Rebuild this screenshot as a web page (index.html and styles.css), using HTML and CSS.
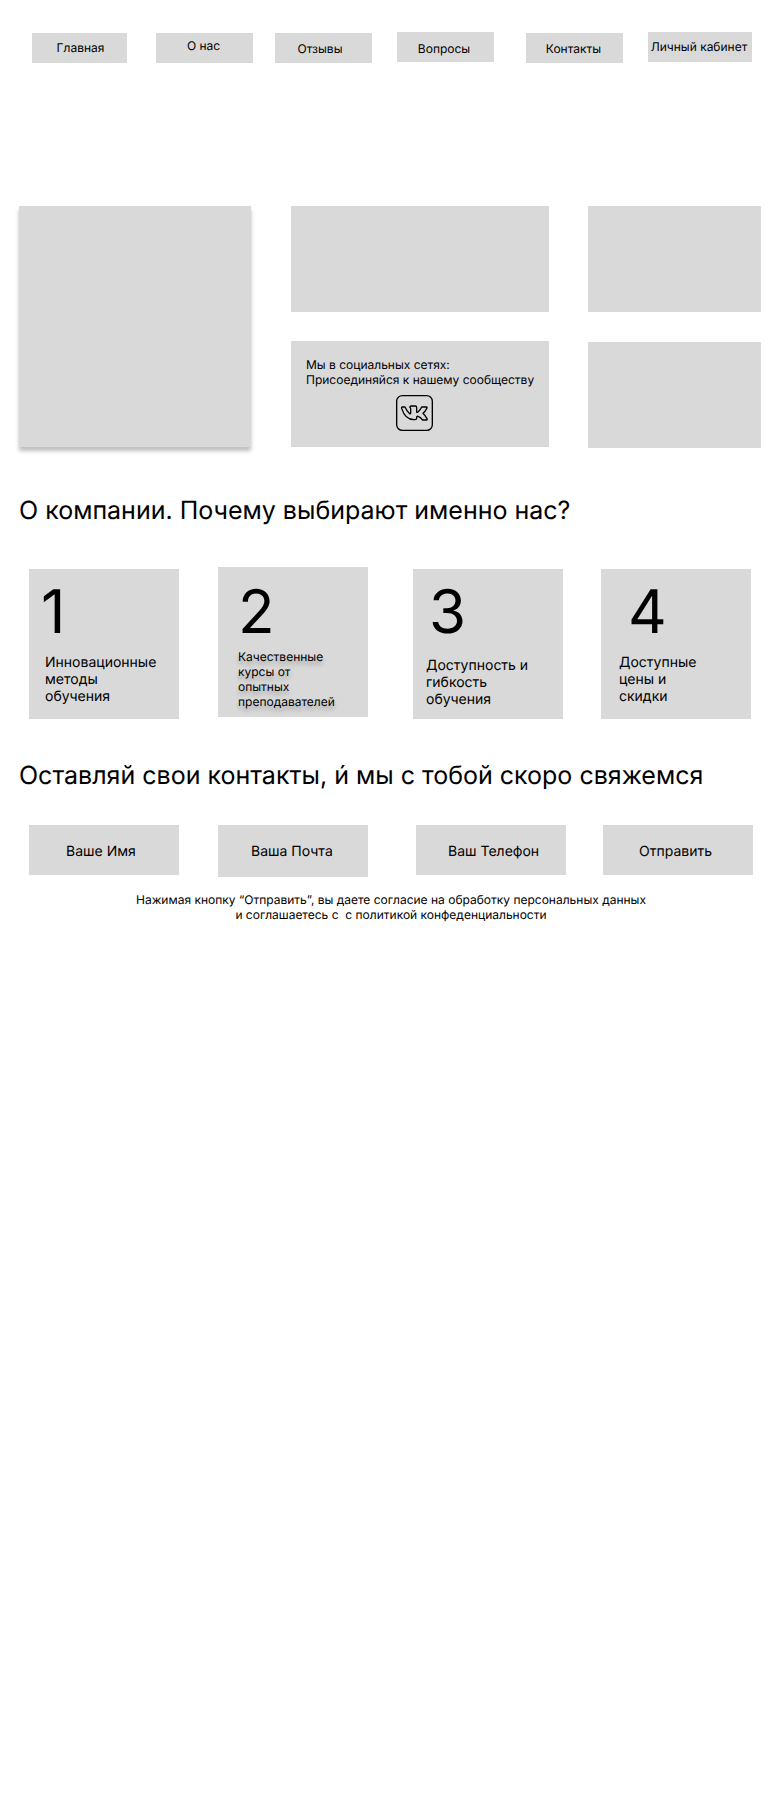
FILE: index.html
```
<!DOCTYPE html>
<html lang="ru">
<head>
<meta charset="utf-8">
<meta name="viewport" content="width=device-width, initial-scale=1">
<title>Главная</title>
<link rel="stylesheet" href="styles.css">
</head>
<body>
<header>
  <nav class="nav">
    <a class="nav-link nav-home" href="#">Главная</a>
    <a class="nav-link nav-about" href="#about">О нас</a>
    <a class="nav-link nav-reviews" href="#">Отзывы</a>
    <a class="nav-link nav-questions" href="#">Вопросы</a>
    <a class="nav-link nav-contacts" href="#contacts">Контакты</a>
    <a class="nav-link nav-account" href="#">Личный кабинет</a>
  </nav>
</header>
<main>
  <section class="tiles">
    <div class="tile tile-large"></div>
    <div class="tile-column">
      <div class="tile"></div>
      <div class="tile social">
        <p class="social-text">Мы в социальных сетях:<br>Присоединяйся к нашему сообществу</p>
        <a class="social-link" href="#" aria-label="ВКонтакте">
          <svg class="social-icon" viewBox="0 0 111 108" fill="none" stroke="#000" stroke-width="4" stroke-linejoin="round">
            <rect x="2" y="2" width="107" height="104" rx="17"/>
            <path d="M19 36H27Q32 48 41 56Q44 58 44 54V42Q44 38 41 36Q43 33 47 33H58Q62 33 62 38V50Q62 54 66 51Q73 45 77 36H91Q95 36 92 41Q88 49 81 55Q89 63 93 71Q95 75 91 75H80Q73 66 66 64Q62 63 62 67V70Q62 74 57 74Q28 76 17 40Q16 36 19 36Z"/>
          </svg>
        </a>
      </div>
    </div>
    <div class="tile-column tile-column-last">
      <div class="tile"></div>
      <div class="tile"></div>
    </div>
  </section>

  <section id="about">
    <h2 class="title">О компании. Почему выбирают именно нас?</h2>
    <div class="cards">
      <article class="card card-first">
        <p class="number">1</p>
        <p class="card-text">Инновационные<br>методы<br>обучения</p>
      </article>
      <article class="card card-second">
        <p class="number">2</p>
        <p class="card-text">Качественные<br>курсы от<br>опытных<br>преподавателей</p>
      </article>
      <article class="card card-third">
        <p class="number">3</p>
        <p class="card-text">Доступность и<br>гибкость<br>обучения</p>
      </article>
      <article class="card card-fourth">
        <p class="number">4</p>
        <p class="card-text">Доступные<br>цены и<br>скидки</p>
      </article>
    </div>
  </section>

  <section id="contacts">
    <h2 class="title">Оставляй свои контакты, и&#769; мы с тобой скоро свяжемся</h2>
    <form class="form">
      <input class="field field-name" type="text" name="name" placeholder="Ваше Имя" aria-label="Ваше Имя">
      <input class="field field-mail" type="email" name="email" placeholder="Ваша Почта" aria-label="Ваша Почта">
      <input class="field field-phone" type="tel" name="phone" placeholder="Ваш Телефон" aria-label="Ваш Телефон">
      <button class="field field-submit" type="submit">Отправить</button>
    </form>
    <p class="note">Нажимая кнопку “Отправить”, вы даете согласие на обработку персональных данных<br>и соглашаетесь с&nbsp; с политикой конфеденциальности</p>
  </section>
</main>
</body>
</html>
```
FILE: styles.css
```
* {
  box-sizing: border-box;
}

body {
  margin: 0;
  background: #fff;
  color: #000;
  font-family: Inter, "Liberation Sans", sans-serif;
  font-size: 12px;
  line-height: 15px;
  text-rendering: geometricPrecision;
}

p,
h2 {
  margin: 0;
  font-weight: 400;
}

/* Navigation */
.nav {
  display: grid;
  grid-template-columns:
    minmax(0, 95fr) minmax(0, 126fr) minmax(0, 119fr)
    minmax(0, 122fr) minmax(0, 129fr) minmax(0, 129fr);
  align-items: start;
  padding: 32px 30px 0 32px;
}

.nav-link {
  height: 30px;
  padding-top: 8px;
  background: #d9d9d9;
  color: inherit;
  text-align: center;
  text-decoration: none;
  white-space: nowrap;
}

.nav-home {
  margin-top: 1px;
  padding-top: 7px;
  padding-left: 2px;
}

.nav-about {
  margin: 1px 0 0 29px;
  padding-top: 5px;
  padding-right: 2px;
}

.nav-reviews {
  margin: 1px 0 0 22px;
  padding-right: 7px;
}

.nav-questions {
  margin-left: 25px;
  padding-top: 9px;
  padding-right: 3px;
}

.nav-contacts {
  margin: 1px 0 0 32px;
  padding-right: 2px;
}

.nav-account {
  margin-left: 25px;
  padding-top: 7px;
  padding-right: 2px;
}

/* Tiles */
.tiles {
  display: grid;
  grid-template-columns: minmax(0, 232fr) minmax(0, 298fr) minmax(0, 212fr);
  align-items: start;
  padding: 143px 21px 0 19px;
}

.tile {
  min-height: 106px;
  background: #d9d9d9;
}

.tile-large {
  height: 241px;
  box-shadow: 0 4px 4px rgba(0, 0, 0, 0.25);
}

.tile-column {
  display: grid;
  gap: 29px;
  margin-left: 40px;
}

.tile-column-last {
  gap: 30px;
  margin-left: 39px;
}

.social {
  display: flex;
  flex-direction: column;
  padding: 16px 10px 16px 15px;
}

.social-link {
  align-self: center;
  margin-top: 8px;
  margin-right: 16px;
}

.social-icon {
  display: block;
  width: 37px;
  height: 36px;
}

/* Advantages */
.title {
  padding: 0 19px;
  font-size: 25px;
  line-height: 30px;
}

#about {
  padding-top: 48px;
}

.cards {
  display: grid;
  grid-template-columns:
    minmax(0, 150fr) minmax(0, 189fr) minmax(0, 195fr) minmax(0, 188fr);
  align-items: start;
  padding: 41px 31px 0 29px;
}

.card {
  min-height: 150px;
  margin-top: 2px;
  padding: 7px 0 7px 16px;
  background: #d9d9d9;
  font-size: 14px;
  line-height: 17px;
}

.number {
  margin-bottom: 5px;
  font-size: 60px;
  line-height: 73px;
}

.card-first .number {
  margin-left: -4px;
}

.card-second {
  margin: 0 0 0 39px;
  padding-top: 9px;
  padding-left: 20px;
}

.card-second .number {
  margin-bottom: 0;
}

.card-second .card-text {
  font-size: 12px;
  line-height: 15px;
  text-shadow: 0 4px 4px rgba(0, 0, 0, 0.25);
}

.card-third {
  margin-left: 45px;
  padding-left: 13px;
}

.card-third .number {
  margin-bottom: 8px;
  margin-left: 3px;
}

.card-fourth {
  margin-left: 38px;
  padding-left: 18px;
}

.card-fourth .number {
  margin-left: 9px;
}

/* Contact form */
#contacts {
  padding-top: 42px;
}

.form {
  display: grid;
  grid-template-columns:
    minmax(0, 150fr) minmax(0, 189fr) minmax(0, 198fr) minmax(0, 187fr);
  align-items: start;
  padding: 34px 29px 0 29px;
}

.field {
  min-width: 0;
  height: 50px;
  padding: 3px 0 0 36px;
  border: 0;
  border-radius: 0;
  background: #d9d9d9;
  color: #000;
  font: inherit;
  font-size: 14px;
  line-height: 17px;
  text-align: left;
  text-rendering: inherit;
}

.field::placeholder {
  color: #000;
  opacity: 1;
}

.field-name {
  padding-left: 37px;
}

.field-mail {
  height: 52px;
  margin-left: 39px;
  padding: 1px 0 0 33px;
}

.field-phone {
  margin-left: 48px;
  padding-left: 32px;
}

.field-submit {
  margin-left: 37px;
}

.note {
  padding: 15px 19px 40px;
  text-align: center;
}
```
